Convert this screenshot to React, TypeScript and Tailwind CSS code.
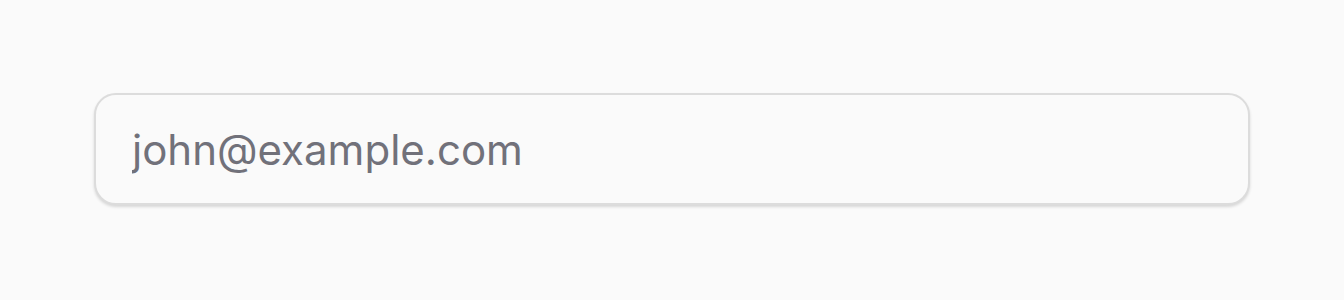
export default function App() {
  return (
    <div className="flex h-[300px] w-full items-center bg-[#fafafa] px-[94px] font-['Inter',sans-serif]">
      <input
        type="email"
        placeholder="john@example.com"
        className="mb-[2px] h-[112px] w-full rounded-[22px] border-2 border-[#dcdcdc] bg-[#fafafa] px-[36px] text-[42px] text-[#18181b] shadow-[0_2px_3px_rgba(0,0,0,0.14)] outline-none placeholder:text-[#71717a]"
      />
    </div>
  );
}
